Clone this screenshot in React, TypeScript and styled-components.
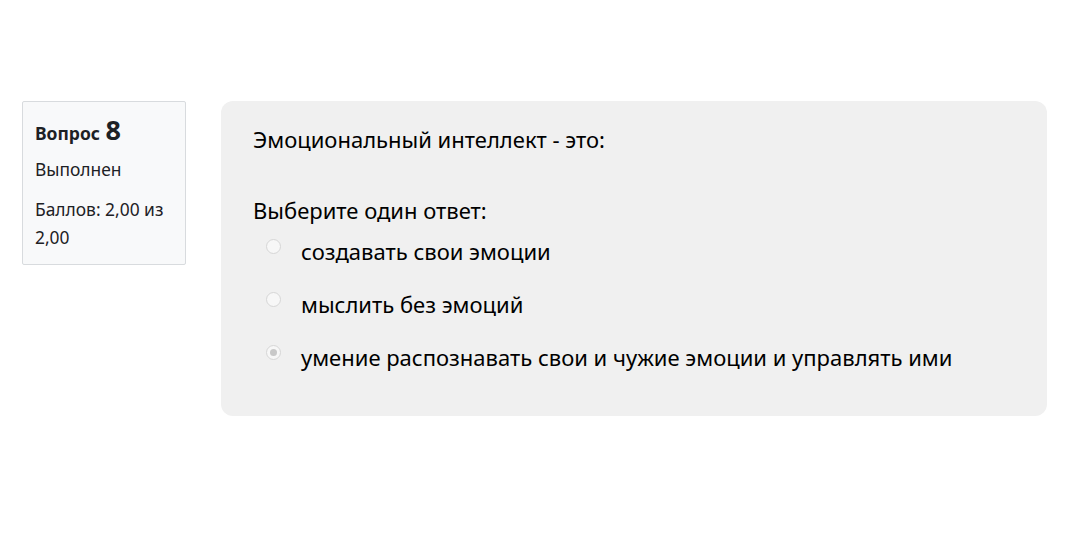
import React from 'react'
import styled, { createGlobalStyle } from 'styled-components'

const GlobalStyle = createGlobalStyle`
  html, body {
    margin: 0;
    padding: 0;
    background: #ffffff;
  }
  body {
    font-family: "Noto Sans", "Open Sans", sans-serif;
    color: #1d2125;
  }
`

const Page = styled.div`
  display: flex;
  align-items: flex-start;
  gap: 35px;
  padding: 101px 23px 0 22px;
`

const Info = styled.div`
  box-sizing: border-box;
  width: 164px;
  height: 164px;
  flex-shrink: 0;
  background: #f8f9fa;
  border: 1px solid #d8dbde;
  border-radius: 2px;
  padding: 12px 12px;
`

const QNo = styled.h3`
  margin: 0 0 7px;
  font-size: 17.5px;
  font-weight: 700;
  line-height: 32px;

  span {
    font-size: 27px;
    margin-left: 1px;
  }
`

const State = styled.div`
  font-size: 17.4px;
  line-height: 26px;
  margin-bottom: 13px;
  color: #1d2125;
`

const Grade = styled.div`
  font-size: 17.4px;
  line-height: 28px;
  color: #1d2125;
`

const Content = styled.div`
  box-sizing: border-box;
  flex: 1;
  min-height: 315px;
  background: #f0f0f0;
  border-radius: 12px;
  padding: 22px 32px 30px;
  color: #000;
`

const QText = styled.p`
  margin: 0 0 40px;
  font-size: 22px;
  line-height: 32px;
`

const Prompt = styled.div`
  font-size: 22px;
  line-height: 30px;
  margin-bottom: 10px;
`

const Options = styled.div`
  display: flex;
  flex-direction: column;
  gap: 21px;
`

const Option = styled.label`
  display: flex;
  align-items: center;
  font-size: 22px;
  line-height: 32px;
  padding-left: 12px;
`

const Radio = styled.span<{ $checked?: boolean }>`
  box-sizing: border-box;
  width: 15px;
  height: 15px;
  margin: -9px 20px 0 1px;
  border-radius: 50%;
  border: 1px solid #d6d6d6;
  background: #f7f7f7;
  display: flex;
  align-items: center;
  justify-content: center;
  flex-shrink: 0;

  &::after {
    content: "";
    width: 7px;
    height: 7px;
    border-radius: 50%;
    background: ${(p) => (p.$checked ? '#c8c8c8' : 'transparent')};
  }
`

const answers = [
  { text: 'создавать свои эмоции', checked: false },
  { text: 'мыслить без эмоций', checked: false },
  { text: 'умение распознавать свои и чужие эмоции и управлять ими', checked: true },
]

export default function App() {
  return (
    <>
      <GlobalStyle />
      <Page>
        <Info>
          <QNo>
            Вопрос <span>8</span>
          </QNo>
          <State>Выполнен</State>
          <Grade>Баллов: 2,00 из 2,00</Grade>
        </Info>
        <Content>
          <QText>Эмоциональный интеллект - это:</QText>
          <Prompt>Выберите один ответ:</Prompt>
          <Options>
            {answers.map((a) => (
              <Option key={a.text}>
                <Radio $checked={a.checked} />
                {a.text}
              </Option>
            ))}
          </Options>
        </Content>
      </Page>
    </>
  )
}
